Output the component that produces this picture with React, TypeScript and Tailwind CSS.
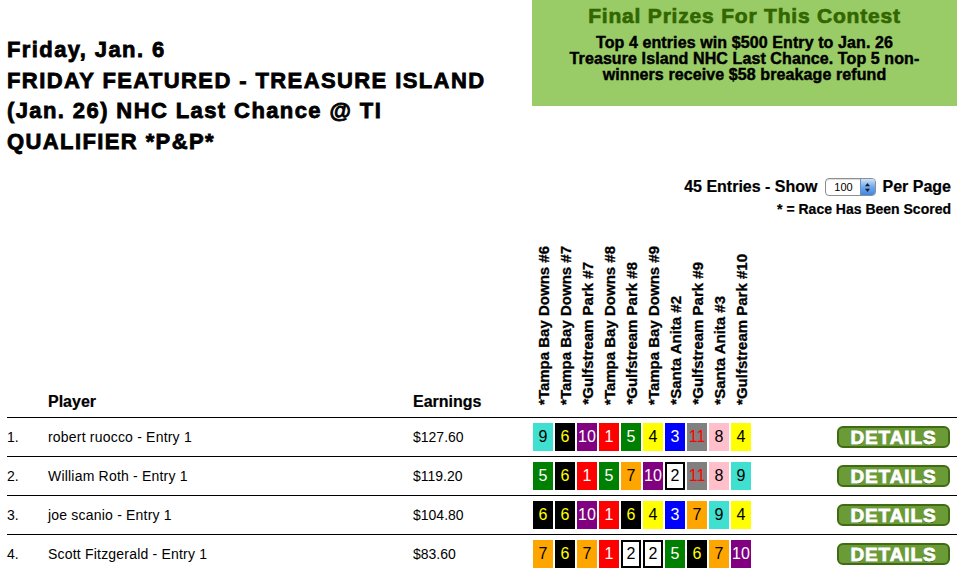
import React from "react";

const cloth: Record<number, string> = {
  1: "bg-[#ff0000] text-white",
  2: "bg-white text-black border-2 border-black",
  3: "bg-[#0000ff] text-white",
  4: "bg-[#ffff00] text-black",
  5: "bg-[#008000] text-white",
  6: "bg-black text-[#ffff00]",
  7: "bg-[#ffa500] text-black",
  8: "bg-[#ffc0cb] text-black",
  9: "bg-[#40e0d0] text-black",
  10: "bg-[#800080] text-white",
  11: "bg-[#808080] text-[#ff0000]",
};

const races = [
  "*Tampa Bay Downs #6",
  "*Tampa Bay Downs #7",
  "*Gulfstream Park #7",
  "*Tampa Bay Downs #8",
  "*Gulfstream Park #8",
  "*Tampa Bay Downs #9",
  "*Santa Anita #2",
  "*Gulfstream Park #9",
  "*Santa Anita #3",
  "*Gulfstream Park #10",
];

const rows = [
  { rank: "1.", name: "robert ruocco - Entry 1", earn: "$127.60", picks: [9, 6, 10, 1, 5, 4, 3, 11, 8, 4] },
  { rank: "2.", name: "William Roth - Entry 1", earn: "$119.20", picks: [5, 6, 1, 5, 7, 10, 2, 11, 8, 9] },
  { rank: "3.", name: "joe scanio - Entry 1", earn: "$104.80", picks: [6, 6, 10, 1, 6, 4, 3, 7, 9, 4] },
  { rank: "4.", name: "Scott Fitzgerald - Entry 1", earn: "$83.60", picks: [7, 6, 7, 1, 2, 2, 5, 6, 7, 10] },
];

function Stepper() {
  return (
    <span className="inline-flex h-[18px] w-[51px] items-stretch overflow-hidden rounded-[4px] border border-[#8e8e8e] bg-white align-middle shadow-[inset_0_1px_1px_rgba(0,0,0,0.15)]">
      <span className="flex flex-1 items-center justify-center pl-[2px] text-[11px] font-normal leading-none text-black">100</span>
      <span className="flex w-[15px] items-center justify-center border-l border-[#6d8fc0] bg-gradient-to-b from-[#cfe3fb] via-[#6fa7ee] to-[#3f86e6]">
        <svg width="7" height="11" viewBox="0 0 7 11">
          <path d="M3.5 1 L6 4.2 L1 4.2 Z" fill="#1a1a1a" />
          <path d="M3.5 10 L6 6.8 L1 6.8 Z" fill="#1a1a1a" />
        </svg>
      </span>
    </span>
  );
}

export default function App() {
  return (
    <div className="min-h-[569px] w-[966px] overflow-hidden bg-white font-['Liberation_Sans',Arial,sans-serif] text-black">
      {/* top section */}
      <div className="flex h-[158px] items-start">
        <div className="ml-[7px] mt-[35px] w-[525px] text-[22px] font-bold leading-[30.5px] tracking-[1.4px] [-webkit-text-stroke:0.8px_black]">
          Friday, Jan. 6
          <br />
          FRIDAY FEATURED - TREASURE ISLAND
          <br />
          (Jan. 26) NHC Last Chance @ TI
          <br />
          QUALIFIER *P&amp;P*
        </div>
        <div className="h-[106px] w-[425px] bg-[#99cc66] pt-[4px] text-center">
          <div className="text-[21px] font-bold leading-[24px] tracking-[0.8px] text-[#336600] [-webkit-text-stroke:0.7px_#336600]">
            Final Prizes For This Contest
          </div>
          <div className="mt-[7px] text-[16px] font-bold leading-[16px] tracking-[0.1px] [-webkit-text-stroke:0.45px_black]">
            Top 4 entries win $500 Entry to Jan. 26
            <br />
            Treasure Island NHC Last Chance. Top 5 non-
            <br />
            winners receive $58 breakage refund
          </div>
        </div>
      </div>

      {/* controls */}
      <div className="mt-[19px] flex flex-col items-end pr-[15px]">
        <div className="flex h-[20px] items-center text-[16px] font-bold leading-[20px] [-webkit-text-stroke:0.2px_black]">
          <span>45 Entries - Show</span>
          <span className="mx-[7px] flex items-center [-webkit-text-stroke:0]">
            <Stepper />
          </span>
          <span>Per Page</span>
        </div>
        <div className="mt-[3px] text-[14px] font-bold leading-[18px] [-webkit-text-stroke:0.2px_black]">* = Race Has Been Scored</div>
      </div>

      {/* table */}
      <div className="ml-[7px] w-[950px]">
        <div className="flex h-[200px] items-end border-b border-black">
          <div className="w-[41px]" />
          <div className="w-[365px] pb-[5px] text-[16px] font-bold leading-[20px] [-webkit-text-stroke:0.2px_black]">Player</div>
          <div className="w-[120px] pb-[5px] text-[16px] font-bold leading-[20px] [-webkit-text-stroke:0.2px_black]">Earnings</div>
          <div className="flex w-[218px] items-end gap-[2px] pb-[12px] pl-[1px]">
            {races.map((r) => (
              <div
                key={r}
                className="w-[20px] rotate-180 whitespace-nowrap text-[15px] font-bold leading-[20px] [-webkit-text-stroke:0.3px_black] [writing-mode:vertical-rl]"
              >
                {r}
              </div>
            ))}
          </div>
          <div className="flex-1" />
        </div>
        {rows.map((row) => (
          <div key={row.rank} className="flex h-[39px] items-center border-b border-black text-[14px]">
            <div className="w-[41px]">{row.rank}</div>
            <div className="w-[365px] tracking-[0.2px]">{row.name}</div>
            <div className="w-[120px]">{row.earn}</div>
            <div className="flex w-[218px] gap-[2px]">
              {row.picks.map((p, i) => (
                <div
                  key={i}
                  className={`flex h-[28px] w-[20px] items-center justify-center text-[16px] leading-none ${cloth[p]}`}
                >
                  {p}
                </div>
              ))}
            </div>
            <div className="flex-1" />
            <div className="mr-[7px] flex h-[22px] w-[113px] items-center justify-center rounded-[6px] border-2 border-[#3f6b12] bg-[#6b9b37] text-[19px] font-bold leading-none tracking-[0.9px] text-white [-webkit-text-stroke:0.8px_white] [text-shadow:0_1px_0_#2f5a0a]">
              DETAILS
            </div>
          </div>
        ))}
      </div>
    </div>
  );
}
